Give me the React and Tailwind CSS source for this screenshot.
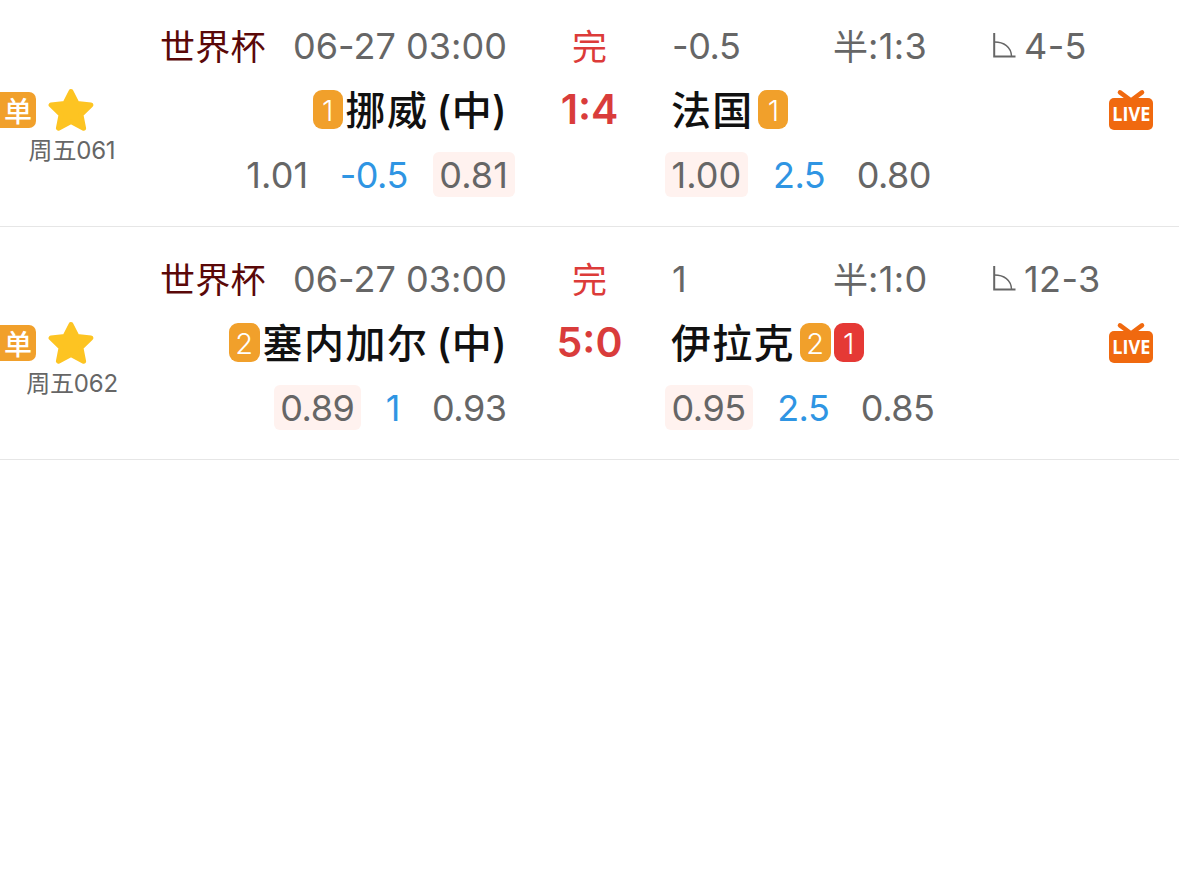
const matches = [
  {
    id: "周五061",
    league: "世界杯",
    time: "06-27 03:00",
    status: "完",
    line: "-0.5",
    half: "1:3",
    corners: "4-5",
    score: "1:4",
    home: { name: "挪威", yellow: 1, odds: ["1.01", "-0.5", "0.81"], hit: 2 },
    away: { name: "法国", yellow: 1, odds: ["1.00", "2.5", "0.80"], hit: 0 },
  },
  {
    id: "周五062",
    league: "世界杯",
    time: "06-27 03:00",
    status: "完",
    line: "1",
    half: "1:0",
    corners: "12-3",
    score: "5:0",
    home: { name: "塞内加尔", yellow: 2, odds: ["0.89", "1", "0.93"], hit: 0 },
    away: { name: "伊拉克", yellow: 2, red: 1, odds: ["0.95", "2.5", "0.85"], hit: 0 },
  },
];

function StarIcon() {
  return (
    <svg width="46" height="44" viewBox="0 0 46 44">
      <path
        d="M23 3.6 L29 15.4 L42.9 17 L32.9 26.6 L35.6 40.2 L23 33.6 L10.4 40.2 L13.1 26.6 L3.1 17 L17 15.4 Z"
        fill="#fdc422"
        stroke="#fdc422"
        strokeWidth="5"
        strokeLinejoin="round"
      />
    </svg>
  );
}

function CornerIcon() {
  return (
    <svg width="23" height="25" viewBox="0 0 23 25" fill="none" stroke="#666">
      <path d="M1.2 0 V23.5 H22.5" strokeWidth="2" />
      <path d="M1.5 9 C11 9 18 14 18.5 23" strokeWidth="1.4" />
    </svg>
  );
}

function LiveIcon() {
  return (
    <svg width="44" height="42" viewBox="0 0 44 42">
      <path d="M11 3.4 L22 11.5 L33 3.4" fill="none" stroke="#f0690f" strokeWidth="4.6" strokeLinecap="round" />
      <rect x="0" y="9" width="44" height="32" rx="5" fill="#f0690f" />
      <text
        x="22.3"
        y="31.5"
        textAnchor="middle"
        textLength="38"
        lengthAdjust="spacingAndGlyphs"
        fontFamily="Open Sans, sans-serif"
        fontSize="19"
        fontWeight="700"
        fill="#fff"
      >
        LIVE
      </text>
    </svg>
  );
}

function Card({ count, red }) {
  return (
    <span
      className={`flex h-[39px] items-center justify-center rounded-[9px] pt-[3px] text-[29px] font-light text-white ${
        count === 1 ? "w-[30px]" : "w-[31px]"
      } ${red ? "bg-[#e53935]" : "bg-[#f1a02b]"}`}
    >
      {count}
    </span>
  );
}

function Odds({ odds, hit }) {
  return (
    <div className="flex h-[45px] items-center gap-[18px]">
      {odds.map((value, i) => (
        <span
          key={i}
          className={`flex h-[45px] items-center rounded-md pr-[7px] pl-[6.5px] ${
            value.includes("1") ? "tracking-[0.1px]" : "tracking-[-0.5px]"
          } ${i === 1 ? "text-[#2f95e3]" : ""} ${i === hit ? "bg-[#fff2ef]" : ""}`}
        >
          {value}
        </span>
      ))}
    </div>
  );
}

function MatchRow({ match }) {
  const { home, away } = match;
  return (
    <div className="flex h-[233px] border-b border-[#e6e6e6] pt-[26px]">
      <div className="w-[142px] pt-[67px]">
        <div className="flex h-[46px] items-center gap-3">
          <span className="flex h-9 w-9 items-center justify-center rounded-r-[7px] bg-[#f1a02b] pt-[3px] text-[28px] font-medium text-white">
            单
          </span>
          <StarIcon />
        </div>
        <div className="w-[144px] pt-px text-center text-[24px] leading-[34px] tracking-[-0.2px]">{match.id}</div>
      </div>

      <div className="flex w-[365px] flex-col items-end">
        <div className="flex h-[50px] items-center gap-[27px]">
          <span className="pt-1 text-[35px] tracking-[0.3px] text-[#5a0808]">{match.league}</span>
          <span className="pt-px tracking-[0.05px]">{match.time}</span>
        </div>
        <div className="mt-[14px] flex h-[50px] items-center gap-[3px]">
          <Card count={home.yellow} />
          <span className="flex gap-[8px] pt-1 text-[40px] font-medium text-[#111]">
            <span className="tracking-[1.5px]">{home.name}</span>
            <span className="tracking-[0.3px]">(中)</span>
          </span>
        </div>
        <div className="-mr-2 mt-[18px]">
          <div className={home.hit === 0 ? "pr-[1.5px]" : ""}>
            <Odds odds={home.odds} hit={home.hit} />
          </div>
        </div>
      </div>

      <div className="flex w-[165px] flex-col items-center">
        <div className="flex h-[50px] items-center pt-1 text-[35px] text-[#dc3b39]">{match.status}</div>
        <div className="mt-[14px] flex h-[50px] items-center pt-px text-[41px] font-semibold text-[#d93c3b]">
          {match.score}
        </div>
      </div>

      <div className="flex flex-1 flex-col items-start">
        <div className="flex h-[50px] items-center">
          <span className="w-[161px] pt-px tracking-[-0.4px]">{match.line}</span>
          <span className="flex w-[160px] items-center">
            <span className="pt-1 text-[35px]">半</span>
            <span className="pt-px tracking-[0.4px]">:{match.half}</span>
          </span>
          <CornerIcon />
          <span className="ml-2 pt-px tracking-[0.4px]">{match.corners}</span>
        </div>
        <div className="mt-[14px] flex h-[50px] items-center">
          <span className="-ml-px mr-[5px] pt-1 text-[40px] font-medium tracking-[1.2px] text-[#111]">{away.name}</span>
          <div className="flex gap-[3px]">
            <Card count={away.yellow} />
            {away.red && <Card count={away.red} red />}
          </div>
        </div>
        <div className="-ml-[7px] mt-[18px]">
          <Odds odds={away.odds} hit={away.hit} />
        </div>
      </div>

      <div className="-ml-11 mr-[26px] pt-[69px]">
        <LiveIcon />
      </div>
    </div>
  );
}

export default function App() {
  return (
    <div className="h-[884px] overflow-hidden bg-white font-['Inter','Noto_Sans_CJK_SC',sans-serif] text-[36px] leading-none whitespace-nowrap text-[#666]">
      <div className="-mt-[6px]">
        {matches.map((match) => (
          <MatchRow key={match.id} match={match} />
        ))}
      </div>
    </div>
  );
}
